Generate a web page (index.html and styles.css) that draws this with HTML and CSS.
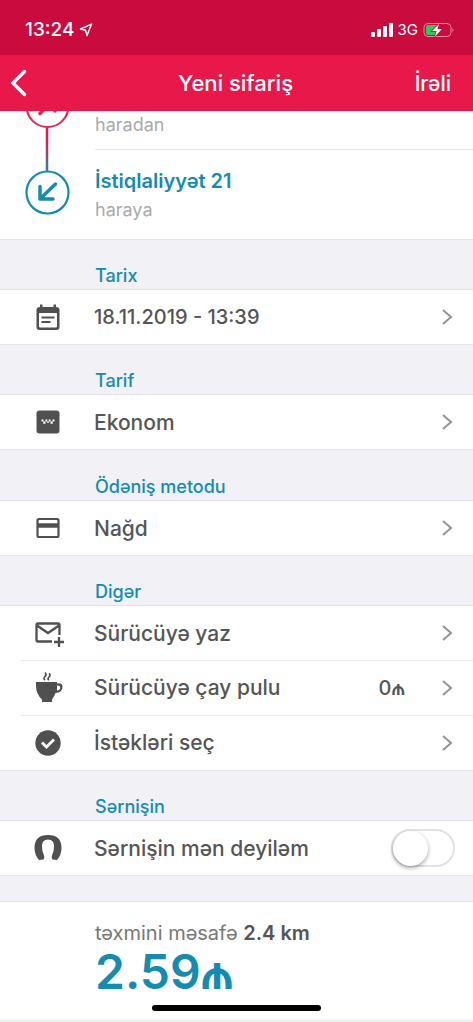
FILE: index.html
```html
<!DOCTYPE html>
<html lang="az">
<head>
<meta charset="utf-8">
<meta name="viewport" content="width=device-width, initial-scale=1">
<title>Yeni sifariş</title>
<link rel="stylesheet" href="styles.css">
</head>
<body>
<svg class="defs" width="0" height="0" aria-hidden="true">
  <symbol id="chevron" viewBox="0 0 12 18"><path d="M2 2l8 7-8 7" fill="none" stroke="currentColor" stroke-width="2"/></symbol>
</svg>
<div class="status">
  <span class="time">13:24</span>
  <svg class="locate" width="14" height="14" viewBox="0 0 14 14"><path d="M12.500 1.200L1.500 6l5 1.300L8 12.500z" fill="none" stroke="#fff" stroke-width="1.400" stroke-linejoin="round"/></svg>
  <svg class="signal" width="22" height="14" viewBox="0 0 22 14" fill="#fff"><rect x="0" y="9" width="4" height="5" rx="1"/><rect x="6" y="6" width="4" height="8" rx="1"/><rect x="12" y="3" width="4" height="11" rx="1"/><rect x="18" y="0" width="4" height="14" rx="1"/></svg>
  <span class="network">3G</span>
  <svg width="32" height="16" viewBox="0 0 32 16"><rect x="1" y="1.500" width="27" height="13" rx="4" fill="none" stroke="#e88ba5"/><path d="M29.500 6v4q2-2 0-4z" fill="#e88ba5"/><path d="M5 3h9v10H5q-2 0-2-2V5q0-2 2-2z" fill="#35c759"/><path d="M16 2L9 9h4.500L12 14.500 19 7h-4.500z" fill="#fff" stroke="#c90b3e" stroke-width="1.500" paint-order="stroke"/></svg>
</div>
<header class="nav">
  <button class="back" aria-label="Geri"><svg width="18" height="28" viewBox="0 0 18 28"><path d="M14.500 2.500L3 14l11.500 11.500" fill="none" stroke="#fff" stroke-width="3.500" stroke-linecap="round"/></svg></button>
  <h1 class="title">Yeni sifariş</h1>
  <button class="next">İrəli</button>
</header>
<main>
  <section class="route">
    <svg class="track" width="95" height="128" viewBox="0 0 95 128" fill="none" stroke-linecap="round">
      <defs><linearGradient id="line" x1="0" y1="16" x2="0" y2="62" gradientUnits="userSpaceOnUse"><stop offset=".25" stop-color="#e8184a"/><stop offset="1" stop-color="#168bb0"/></linearGradient></defs>
      <path d="M47 17v43" stroke="url(#line)" stroke-width="2.500" stroke-linecap="butt"/>
      <circle cx="47.500" cy="-5" r="21" stroke="#e12451" stroke-width="2"/>
      <path d="M40 2.500L55-12.500V0" stroke="#e12451" stroke-width="3.500"/>
      <circle cx="47.500" cy="81.500" r="21" stroke="#168bb0" stroke-width="2.200"/>
      <path d="M55.500 73L40 88M40 75.500V88h13" stroke="#168bb0" stroke-width="3.500" stroke-linejoin="round"/>
    </svg>
    <div class="stops">
      <div class="stop from"><span class="hint">haradan</span></div>
      <div class="stop to"><span class="place">İstiqlaliyyət 21</span><span class="hint">haraya</span></div>
    </div>
  </section>

  <h2 class="label">Tarix</h2>
  <section class="group">
    <button class="row">
      <svg class="icon" width="30" height="32" viewBox="0 0 30 32"><path d="M7 3.500h2.500V6h11V3.500H23V6q3.500 0 3.500 3v17q0 3-3 3h-17q-3 0-3-3V9q0-3 3.500-3zM6 12v13.500q0 1 1 1h16q1 0 1-1V12z" fill="#505050" fill-rule="evenodd"/><path d="M8.500 16.500h13M8.500 21h9" stroke="#505050" stroke-width="2.200"/></svg>
      <span class="text date">18.11.2019 - 13:39</span>
      <svg class="chev" width="12" height="18"><use href="#chevron"/></svg>
    </button>
  </section>

  <h2 class="label">Tarif</h2>
  <section class="group">
    <button class="row">
      <svg class="icon" width="30" height="32" viewBox="0 0 30 32"><rect x="3.500" y="4.500" width="23" height="23" rx="3" fill="#505050"/><path d="M8.500 13.500h2v2h-2zM12.500 13.500h1.800v2h-1.800zM15.700 13.500h1.800v2h-1.800zM19.500 13.500h2v2h-2zM10.300 15.500h2.200v2.200h-2.200zM17.500 15.500h2.200v2.200h-2.200zM14.300 15.500h1.400v1.500h-1.400z" fill="#fff"/></svg>
      <span class="text">Ekonom</span>
      <svg class="chev" width="12" height="18"><use href="#chevron"/></svg>
    </button>
  </section>

  <h2 class="label payment">Ödəniş metodu</h2>
  <section class="group">
    <button class="row">
      <svg class="icon" width="30" height="32" viewBox="0 0 30 32"><rect x="4.500" y="7" width="21" height="18" rx="1.500" fill="none" stroke="#505050" stroke-width="2.200"/><path d="M4 13.500h22" stroke="#505050" stroke-width="4.500"/></svg>
      <span class="text">Nağd</span>
      <svg class="chev" width="12" height="18"><use href="#chevron"/></svg>
    </button>
  </section>

  <h2 class="label">Digər</h2>
  <section class="group">
    <button class="row">
      <svg class="icon" width="30" height="32" viewBox="0 0 30 32" fill="none" stroke="#505050" stroke-width="2.300"><path d="M19 24.500H5q-1.500 0-1.500-1.500V8q0-1.500 1.500-1.500h20q1.500 0 1.500 1.500v10M4 8.500l11 7.500 11-7.500M26 20v10M21 25h10" /></svg>
      <span class="text">Sürücüyə yaz</span>
      <svg class="chev" width="12" height="18"><use href="#chevron"/></svg>
    </button>
    <button class="row">
      <svg class="icon" width="30" height="32" viewBox="0 0 30 32"><path d="M3 10h21v1.500q5.500-1 5.500 3.500 0 5.500-7 6-1 3.500-3.500 6.500V30H9v-2.500Q3 22 3 14zM24 13.500v5q3.200-.5 3.200-3T24 13.500z" fill="#505050" fill-rule="evenodd"/><path d="M12 8q-2-1.500 0-3.500t0-4M16 8q-2-1 0-3t0-3.500" fill="none" stroke="#505050" stroke-width="1.700"/></svg>
      <span class="text">Sürücüyə çay pulu</span>
      <span class="amount">0<span class="manat">₼</span></span>
      <svg class="chev" width="12" height="18"><use href="#chevron"/></svg>
    </button>
    <button class="row">
      <svg class="icon" width="30" height="32" viewBox="0 0 30 32"><circle cx="15" cy="16" r="12.700" fill="#505050"/><path d="M9 15.500l4.500 4.500 7.500-7.500" fill="none" stroke="#fff" stroke-width="2.800"/></svg>
      <span class="text">İstəkləri seç</span>
      <svg class="chev" width="12" height="18"><use href="#chevron"/></svg>
    </button>
  </section>

  <h2 class="label">Sərnişin</h2>
  <section class="group">
    <label class="row">
      <svg class="icon" width="30" height="32" viewBox="0 0 30 32"><path d="M6 28l4.500-.5q1.500-2 0-5.500-1.500-3-1.500-8 0-6.500 6-6.500t6 6.500q0 5-1.500 8-1.500 3.500 0 5.500l4.500.5q4.500-5 4.500-12Q28.500 3 15 3T1.500 16Q1.500 23 6 28z" fill="#505050"/></svg>
      <span class="text">Sərnişin mən deyiləm</span>
      <input class="switch" type="checkbox" role="switch">
    </label>
  </section>
</main>
<footer class="total">
  <p class="distance">təxmini məsafə <strong>2.4 km</strong></p>
  <p class="price">2.59<span class="manat">₼</span></p>
  <div class="home"></div>
</footer>
</body>
</html>
```
FILE: styles.css
```css
* { box-sizing: border-box; }
body {
  margin: 0;
  min-height: 100vh;
  background: #f1f1f6;
  color: #555;
  font-family: Inter, "Noto Sans", sans-serif;
}
button {
  border: 0;
  padding: 0;
  background: none;
  color: inherit;
  font: inherit;
  text-align: left;
}
svg { flex: none; display: block; }
.defs { position: absolute; }
.status {
  display: flex;
  align-items: center;
  height: 55px;
  padding: 4px 18px 0 25px;
  background: #c90b3e;
  color: #fff;
}
.time { font-size: 19px; font-weight: 500; }
.locate { margin-left: 5px; }
.signal { margin-left: auto; }
.network { margin: 0 5px; font-size: 15px; }
.nav {
  display: grid;
  grid-template-columns: 1fr auto 1fr;
  align-items: center;
  height: 56px;
  padding: 0 22px 0 10px;
  background: #e8184a;
  color: #fff;
}
.title { margin: 0 0 0 10px; font-size: 22px; line-height: 28px; font-weight: 500; }
.next { justify-self: end; font-size: 21px; font-weight: 500; }
.route {
  display: flex;
  background: #fff;
  border-bottom: 1px solid #e7e7eb;
}
.stops { flex: 1; }
.stop { display: flex; flex-direction: column; }
.from { padding: 3px 0 13px; border-bottom: 1px solid #e7e7eb; }
.to { padding: 18px 0 16px; gap: 5px; }
.place { color: #168bb0; font-size: 20px; line-height: 26px; font-weight: 600; }
.hint { color: #aaa; font-size: 18px; line-height: 22px; }
.label {
  margin: 0;
  padding: 25px 20px 2px 95px;
  color: #168bb0;
  font-size: 18px;
  line-height: 22px;
  font-weight: 500;
}
.payment { padding-top: 26px; }
.group {
  background: #fff;
  border-top: 1px solid #e2e2e7;
  border-bottom: 1px solid #e7e7eb;
}
.row {
  display: flex;
  align-items: center;
  width: 100%;
  height: 54px;
  padding: 0 20px 0 33px;
}
.row + .row {
  height: 55px;
  background: linear-gradient(#ededf0, #ededf0) 20px 0 / 100% 1px no-repeat;
}
.icon { margin-right: 31px; color: #505050; overflow: visible; }
.text { flex: 1; font-size: 21px; font-weight: 500; }
.date { font-size: 20px; }
.amount { margin-right: 36px; font-size: 20px; font-weight: 500; }
.manat { font-family: Roboto, "Noto Sans", "DejaVu Sans", sans-serif; }
.chev { color: #949494; }
.switch {
  appearance: none;
  display: flex;
  align-items: center;
  width: 64px;
  height: 38px;
  margin: 0 -2px 0 0;
  border: 2px solid #e2e2e2;
  border-radius: 20px;
  background: #fff;
}
.switch::before {
  content: "";
  width: 35px;
  height: 35px;
  border-radius: 50%;
  background: #fff;
  box-shadow: 0 2px 4px rgba(0, 0, 0, .35);
}
.switch:checked { background: #168bb0; }
.switch:checked::before { margin-left: auto; }
.total {
  margin-top: 25px;
  padding: 19px 20px 8px 95px;
  border-top: 1px solid #dedee3;
  background: #fff;
}
.distance { margin: 0; font-size: 20px; line-height: 24px; color: #777; }
.distance strong { color: #555; font-weight: 600; }
.price { margin: 0; color: #168bb0; font-size: 48px; line-height: 54px; font-weight: 600; }
.home {
  width: 169px;
  height: 6px;
  margin: 5px 0 0 57px;
  border-radius: 3px;
  background: #000;
}
```
